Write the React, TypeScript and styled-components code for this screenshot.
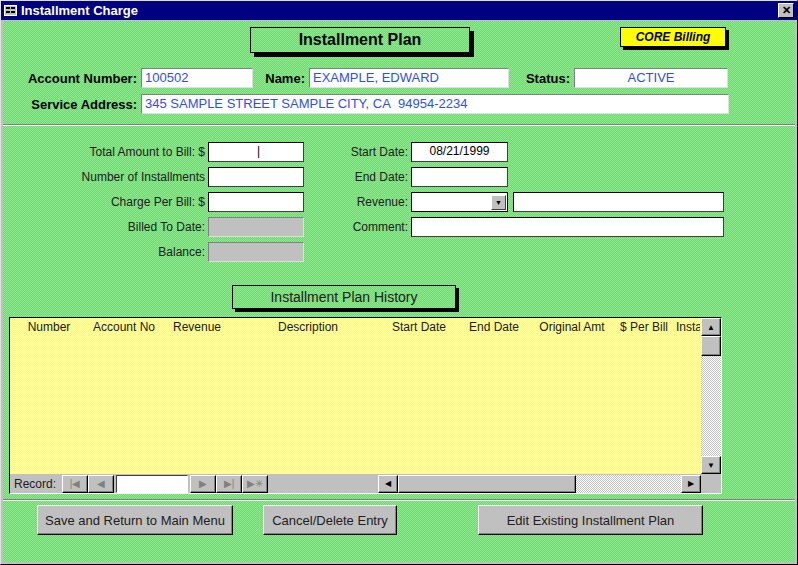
import styled, { createGlobalStyle } from 'styled-components'

const Global = createGlobalStyle`
  html, body { margin: 0; padding: 0; background: #c0c0c0; }
  body { font-family: Arial, "Liberation Sans", sans-serif; font-size: 12px; }
`

const Window = styled.div`
  width: 796px;
  height: 563px;
  border: 1px solid #000;
  border-top-color: #dfdfdf;
  border-left-color: #dfdfdf;
  display: flex;
  flex-direction: column;
  background: #c0c0c0;
`

const TitleBar = styled.div`
  height: 19px;
  background: #000080;
  color: #fff;
  font-weight: bold;
  font-size: 13px;
  display: flex;
  align-items: center;
  padding: 0 3px;
  gap: 4px;
`

const CloseBtn = styled.div`
  margin-left: auto;
  width: 14px;
  height: 13px;
  background: #c0c0c0;
  border: 1px solid #fff;
  border-right-color: #000;
  border-bottom-color: #000;
  color: #000;
  font-size: 11px;
  line-height: 12px;
  text-align: center;
`

const Body = styled.div`
  flex: 1;
  margin: 1px 2px 2px 2px;
  background-color: #80e080;
  background-image: repeating-conic-gradient(#70d870 0 25%, #90e890 0 50%);
  background-size: 2px 2px;
  display: flex;
  flex-direction: column;
`

const Header = styled.div`
  position: relative;
  height: 44px;
  display: flex;
  padding-top: 6px;
  box-sizing: border-box;
`

const PlanTitle = styled.div`
  width: 218px;
  height: 24px;
  margin-left: 247px;
  border: 1px solid #000;
  box-shadow: 4px 4px 0 #000;
  font-weight: bold;
  font-size: 16px;
  display: flex;
  align-items: center;
  justify-content: center;
`

const CoreBadge = styled.div`
  position: absolute;
  left: 617px;
  top: 6px;
  width: 104px;
  height: 18px;
  background: #ffff00;
  border: 1px solid #000;
  box-shadow: 3px 3px 0 #000;
  font-weight: bold;
  font-style: italic;
  font-size: 12px;
  display: flex;
  align-items: center;
  justify-content: center;
`

const InfoRow = styled.div<{ $mt?: number }>`
  display: flex;
  align-items: center;
  height: 20px;
  margin-top: ${p => p.$mt ?? 0}px;
`

const BoldLabel = styled.div<{ $w: number }>`
  width: ${p => p.$w}px;
  text-align: right;
  padding-right: 4px;
  box-sizing: border-box;
  font-weight: bold;
  font-size: 13px;
`

const Field = styled.div<{ $w: number; $grey?: boolean; $center?: boolean }>`
  width: ${p => p.$w}px;
  height: 20px;
  box-sizing: border-box;
  background: ${p => (p.$grey ? '#c0c0c0' : '#fff')};
  border: 1px solid #808080;
  border-right-color: #dfdfdf;
  border-bottom-color: #dfdfdf;
  color: #3050e0;
  font-size: 13px;
  padding: 1px 3px;
  white-space: nowrap;
  overflow: hidden;
  text-align: ${p => (p.$center ? 'center' : 'left')};
`

const Separator = styled.div<{ $m?: string }>`
  height: 0;
  border-top: 1px solid #808080;
  border-bottom: 1px solid #fff;
  margin: ${p => p.$m ?? '0'};
`

const FieldsGrid = styled.div`
  display: flex;
  margin-top: 16px;
`

const Column = styled.div`
  display: flex;
  flex-direction: column;
  gap: 5px;
`

const FRow = styled.div`
  display: flex;
  align-items: center;
  height: 20px;
`

const Label = styled.div<{ $w: number }>`
  width: ${p => p.$w}px;
  text-align: right;
  padding-right: 3px;
  box-sizing: border-box;
  color: #202020;
  font-size: 12px;
`

const Input = styled(Field)`
  color: #000;
  font-size: 12px;
  border: 1px solid #000;
  border-right-color: #404040;
  border-bottom-color: #404040;
`

const Combo = styled.div`
  display: flex;
  width: 97px;
  height: 20px;
  box-sizing: border-box;
  background: #fff;
  border: 1px solid #000;
  justify-content: flex-end;
  align-items: center;
  padding-right: 1px;
`

const DropBtn = styled.div`
  width: 15px;
  height: 15px;
  background: #c0c0c0;
  border: 1px solid #fff;
  border-right-color: #404040;
  border-bottom-color: #404040;
  box-sizing: border-box;
  display: flex;
  align-items: center;
  justify-content: center;
  font-size: 7px;
`

const HistoryTitle = styled.div`
  margin: 23px 0 0 229px;
  width: 222px;
  height: 22px;
  border: 1px solid #000;
  box-shadow: 3px 3px 0 #000;
  font-size: 14px;
  display: flex;
  align-items: center;
  justify-content: center;
  color: #202020;
`

const Sheet = styled.div`
  margin: 8px 0 0 6px;
  width: 713px;
  height: 177px;
  border: 1px solid #000;
  border-right-color: #fff;
  border-bottom-color: #fff;
  box-sizing: border-box;
  display: grid;
  grid-template-columns: 1fr 20px;
  grid-template-rows: 1fr 19px;
  background: #c0c0c0;
`

const SheetArea = styled.div`
  background: #ffff90;
  background-image: repeating-conic-gradient(#fff880 0 25%, #ffffa8 0 50%);
  background-size: 2px 2px;
  display: flex;
  align-items: flex-start;
  padding-top: 2px;
  font-size: 12px;
  color: #202020;
  white-space: nowrap;
  overflow: hidden;
`

const Col = styled.div<{ $w: number; $left?: boolean }>`
  width: ${p => p.$w}px;
  flex-shrink: 0;
  overflow: hidden;
  text-align: ${p => (p.$left ? 'left' : 'center')};
`

const VScroll = styled.div`
  background-image: repeating-conic-gradient(#c0c0c0 0 25%, #fff 0 50%);
  background-size: 2px 2px;
  display: flex;
  flex-direction: column;
`

const SBtn = styled.div<{ $h?: number; $w?: number }>`
  width: ${p => p.$w ?? 20}px;
  height: ${p => p.$h ?? 18}px;
  box-sizing: border-box;
  background: #c0c0c0;
  border: 1px solid #fff;
  border-right-color: #000;
  border-bottom-color: #000;
  box-shadow: inset -1px -1px 0 #808080;
  display: flex;
  align-items: center;
  justify-content: center;
  font-size: 8px;
  color: #000;
  flex-shrink: 0;
`

const Thumb = styled(SBtn)`
  margin-bottom: auto;
`

const BottomBar = styled.div`
  display: flex;
  align-items: center;
  background: #c0c0c0;
`

const RecLabel = styled.div`
  padding: 0 6px 0 4px;
  font-size: 12px;
  color: #202020;
`

const NavBtn = styled(SBtn)`
  width: 26px;
  height: 18px;
  color: #808080;
  font-size: 10px;
`

const RecBox = styled.div`
  width: 72px;
  height: 18px;
  background: #fff;
  border: 1px solid #404040;
  border-right-color: #fff;
  border-bottom-color: #fff;
  box-sizing: border-box;
  margin: 0 2px;
`

const HScroll = styled.div`
  flex: 1;
  display: flex;
  margin-left: 110px;
  height: 18px;
  background-image: repeating-conic-gradient(#c0c0c0 0 25%, #fff 0 50%);
  background-size: 2px 2px;
`

const Spacer = styled.div`
  flex: 1;
`

const Buttons = styled.div`
  display: flex;
  align-items: center;
  height: 30px;
  margin-top: 4px;
`

const Button = styled.div<{ $w: number; $ml: number }>`
  width: ${p => p.$w}px;
  margin-left: ${p => p.$ml}px;
  height: 30px;
  box-sizing: border-box;
  background: #c0c0c0;
  border: 1px solid #fff;
  border-right-color: #000;
  border-bottom-color: #000;
  box-shadow: inset -1px -1px 0 #808080;
  display: flex;
  align-items: center;
  justify-content: center;
  font-size: 13px;
  color: #202020;
`

export default function App() {
  return (
    <>
      <Global />
      <Window>
        <TitleBar>
          <svg width="13" height="11" viewBox="0 0 13 11">
            <rect x="0.5" y="0.5" width="12" height="10" fill="#c0c0c0" stroke="#fff" />
            <rect x="2" y="2" width="4" height="2" fill="#000" />
            <rect x="7" y="2" width="4" height="2" fill="#000" />
            <rect x="2" y="6" width="4" height="2" fill="#000" />
            <rect x="7" y="6" width="4" height="2" fill="#000" />
          </svg>
          Installment Charge
          <CloseBtn>✕</CloseBtn>
        </TitleBar>
        <Body>
          <Header>
            <PlanTitle>Installment Plan</PlanTitle>
            <CoreBadge>CORE Billing</CoreBadge>
          </Header>
          <InfoRow $mt={3}>
            <BoldLabel $w={138}>Account Number:</BoldLabel>
            <Field $w={112}>100502</Field>
            <BoldLabel $w={56}>Name:</BoldLabel>
            <Field $w={200}>EXAMPLE, EDWARD</Field>
            <BoldLabel $w={65}>Status:</BoldLabel>
            <Field $w={154} $center>ACTIVE</Field>
          </InfoRow>
          <InfoRow $mt={6}>
            <BoldLabel $w={138}>Service Address:</BoldLabel>
            <Field $w={588}>345 SAMPLE STREET SAMPLE CITY, CA&nbsp; 94954-2234</Field>
          </InfoRow>
          <Separator $m="10px 0 0 0" />
          <FieldsGrid>
            <Column>
              <FRow><Label $w={205}>Total Amount to Bill: $</Label><Input $w={96}><span style={{ marginLeft: 45 }}>|</span></Input></FRow>
              <FRow><Label $w={205}>Number of Installments</Label><Input $w={96} /></FRow>
              <FRow><Label $w={205}>Charge Per Bill: $</Label><Input $w={96} /></FRow>
              <FRow><Label $w={205}>Billed To Date:</Label><Field $w={96} $grey /></FRow>
              <FRow><Label $w={205}>Balance:</Label><Field $w={96} $grey /></FRow>
            </Column>
            <Column>
              <FRow><Label $w={107}>Start Date:</Label><Input $w={97} $center>08/21/1999</Input></FRow>
              <FRow><Label $w={107}>End Date:</Label><Input $w={97} /></FRow>
              <FRow>
                <Label $w={107}>Revenue:</Label>
                <Combo><DropBtn>▼</DropBtn></Combo>
                <Input $w={211} style={{ marginLeft: 5 }} />
              </FRow>
              <FRow><Label $w={107}>Comment:</Label><Input $w={313} /></FRow>
            </Column>
          </FieldsGrid>
          <HistoryTitle>Installment Plan History</HistoryTitle>
          <Sheet>
            <SheetArea>
              <Col $w={78}>Number</Col>
              <Col $w={72}>Account No</Col>
              <Col $w={74}>Revenue</Col>
              <Col $w={148}>Description</Col>
              <Col $w={74}>Start Date</Col>
              <Col $w={76}>End Date</Col>
              <Col $w={80}>Original Amt</Col>
              <Col $w={64}>$ Per Bill</Col>
              <Col $w={24} $left>Installments</Col>
            </SheetArea>
            <VScroll>
              <SBtn>▲</SBtn>
              <Thumb $h={20} />
              <SBtn>▼</SBtn>
            </VScroll>
            <BottomBar>
              <RecLabel>Record:</RecLabel>
              <NavBtn>|◀</NavBtn>
              <NavBtn>◀</NavBtn>
              <RecBox />
              <NavBtn>▶</NavBtn>
              <NavBtn>▶|</NavBtn>
              <NavBtn>▶✳</NavBtn>
              <HScroll>
                <SBtn>◀</SBtn>
                <SBtn $w={178} />
                <Spacer />
                <SBtn>▶</SBtn>
              </HScroll>
            </BottomBar>
            <div />
          </Sheet>
          <Separator $m="5px 0 0 0" />
          <Buttons>
            <Button $w={196} $ml={34}>Save and Return to Main Menu</Button>
            <Button $w={134} $ml={30}>Cancel/Delete Entry</Button>
            <Button $w={225} $ml={81}>Edit Existing Installment Plan</Button>
          </Buttons>
        </Body>
      </Window>
    </>
  )
}
